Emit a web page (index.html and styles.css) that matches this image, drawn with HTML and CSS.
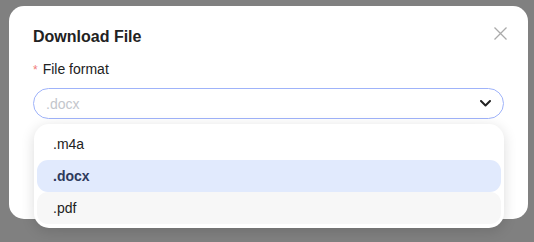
FILE: index.html
```html
<!DOCTYPE html>
<html>
<head>
<meta charset="utf-8">
<link rel="stylesheet" href="styles.css">
</head>
<body>
<div class="backdrop">
  <div class="modal">
    <div class="modal-header">
      <h2 class="title">Download File</h2>
      <button class="close" aria-label="Close">
        <svg width="13" height="13" viewBox="0 0 13 13"><path d="M0.5 0.5L12.5 12.5M12.5 0.5L0.5 12.5" stroke="#aaaaaa" stroke-width="1.3" fill="none"/></svg>
      </button>
    </div>
    <div class="field">
      <label class="label"><span class="req">*</span>File format</label>
      <div class="select-wrap">
        <div class="select">
          <span class="placeholder">.docx</span>
          <svg class="chevron" width="11" height="7" viewBox="0 0 11 7"><path d="M1 1L5.5 5.5L10 1" stroke="#222" stroke-width="2" fill="none" stroke-linecap="round" stroke-linejoin="round"/></svg>
        </div>
        <ul class="menu">
          <li class="option">.m4a</li>
          <li class="option selected">.docx</li>
          <li class="option hover">.pdf</li>
        </ul>
      </div>
    </div>
  </div>
</div>
</body>
</html>
```

FILE: styles.css
```css
html, body {
  margin: 0;
  padding: 0;
}
body {
  width: 534px;
  height: 242px;
  overflow: hidden;
  background: #808080;
  font-family: "Liberation Sans", Arial, sans-serif;
}
.backdrop {
  padding: 6px 6px 0 9px;
}
.modal {
  background: #ffffff;
  border-radius: 15px;
  height: 213px;
  box-sizing: border-box;
  padding: 20px 21px 0 24px;
}
.modal-header {
  display: flex;
  justify-content: space-between;
  align-items: flex-start;
}
.title {
  margin: 0;
  font-size: 16px;
  font-weight: bold;
  color: #222222;
  line-height: 22px;
}
.close {
  border: 0;
  background: none;
  padding: 0;
  margin-top: 1px;
  width: 13px;
  height: 13px;
  display: block;
}
.close svg { display: block; }
.field {
  margin-top: 12px;
  padding-right: 3px;
}
.label {
  display: flex;
  align-items: baseline;
  font-size: 14px;
  color: #222222;
  line-height: 18px;
}
.req {
  color: #f07a7a;
  font-size: 12px;
  margin-right: 5px;
}
.select-wrap {
  position: relative;
  margin-top: 9px;
}
.select {
  height: 31px;
  box-sizing: border-box;
  border: 1px solid #9fb3fa;
  border-radius: 16px;
  display: flex;
  align-items: center;
  justify-content: space-between;
  padding: 0 12px 0 12px;
  background: #fff;
}
.placeholder {
  font-size: 14px;
  color: #c3c6cc;
}
.chevron { display: block; }
.menu {
  position: absolute;
  left: 1px;
  right: 0;
  top: 36px;
  margin: 0;
  list-style: none;
  background: #fff;
  border-radius: 15px;
  padding: 4px 3px;
  box-shadow: 0 3px 14px rgba(0,0,0,0.14);
}
.option {
  height: 32px;
  line-height: 32px;
  padding: 0 16px;
  font-size: 14px;
  color: #222;
  border-radius: 11px;
}
.option.selected {
  background: #e1eafd;
  color: #2e3a5c;
  font-weight: bold;
}
.option.hover {
  background: #f7f7f7;
}
```
